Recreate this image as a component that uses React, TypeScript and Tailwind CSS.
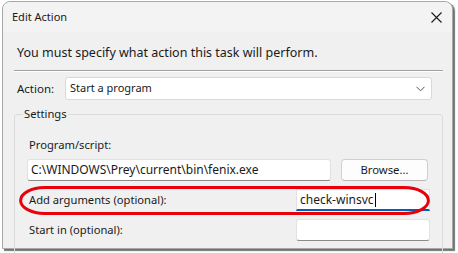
import React from "react";

const font = { fontFamily: '"Segoe UI", "Noto Sans", "Open Sans", sans-serif' };

function TextBox({ className, children }: { className?: string; children?: React.ReactNode }) {
  return (
    <div
      className={`flex h-[22px] items-center border border-[#e1e1e1] border-b-[#8a8a8a] bg-white px-[3px] text-[12px] text-[#1a1a1a] rounded-[3px] ${className ?? ""}`}
    >
      {children}
    </div>
  );
}

export default function App() {
  return (
    <div className="h-[253px] w-[458px] overflow-hidden bg-white" style={font}>
      <div className="ml-[2px] mt-[1px] h-[248px] w-[451px] rounded-t-[8px] border border-[#a8a8a8] bg-[#f0f0f0] shadow-[2px_2px_1px_rgba(0,0,0,0.55)]">
        {/* title bar */}
        <div className="flex h-[30px] items-center justify-between rounded-t-[8px] bg-[#f3f3f3] pl-[9px] pr-[10px]">
          <span className="text-[11px] text-[#1a1a1a]">Edit Action</span>
          <svg width="11" height="11" viewBox="0 0 11 11" className="mt-[1px]">
            <path d="M0.5 0.5 L10.5 10.5 M10.5 0.5 L0.5 10.5" stroke="#1a1a1a" strokeWidth="1.1" />
          </svg>
        </div>

        <div className="pl-[11px] pr-[9px]">
          <p className="mt-[13px] pl-[3px] text-[12.5px] leading-[16px] text-[#1a1a1a]">
            You must specify what action this task will perform.
          </p>
          <div className="mt-[9px] h-[2px] border-t border-[#a0a0a0] border-b border-b-white" />

          {/* action row */}
          <div className="mt-[5px] flex items-center pl-[3px]">
            <span className="w-[48px] text-[11.5px] text-[#1a1a1a]">Action:</span>
            <div className="flex h-[23px] w-[367px] items-center justify-between rounded-[3px] border border-[#d9d9d9] bg-white pl-[4px] pr-[6px] text-[11px] text-[#1a1a1a]">
              <span>Start a program</span>
              <svg width="9" height="6" viewBox="0 0 9 6">
                <path d="M0.5 0.8 L4.5 4.8 L8.5 0.8" fill="none" stroke="#555" strokeWidth="1" />
              </svg>
            </div>
          </div>

          {/* settings group */}
          <div className="relative mt-[14px] h-[160px] rounded-[3px] border border-[#dcdcdc] pl-[12px] pr-[12px]">
            <span className="absolute left-[8px] top-[-9px] bg-[#f0f0f0] px-[1px] text-[11.2px] leading-[16px] text-[#1a1a1a]">
              Settings
            </span>
            <p className="mt-[22px] pl-[2px] text-[11.2px] leading-[16px] text-[#1a1a1a]">Program/script:</p>
            <div className="mt-[6px] flex items-center">
              <TextBox className="w-[304px]">C:\WINDOWS\Prey\current\bin\fenix.exe</TextBox>
              <button className="ml-[10px] h-[22px] w-[87px] rounded-[4px] border border-[#d0d0d0] border-b-[#b8b8b8] bg-[#fdfdfd] text-[11.3px] text-[#1a1a1a]">
                Browse...
              </button>
            </div>
            <div className="relative mt-[8px] flex items-center justify-between">
              <span className="pl-[2px] text-[11.2px] text-[#1a1a1a]">Add arguments (optional):</span>
              <div className="flex h-[22px] w-[134px] items-center border border-[#e1e1e1] border-b-2 border-b-[#005fb8] bg-white px-[3px] text-[12px] text-[#1a1a1a]">
                check-winsvc<span className="ml-[1px] h-[14px] w-[1px] bg-black" />
              </div>
              {/* red annotation */}
              <svg
                className="pointer-events-none absolute left-[-8px] top-[-3px]"
                width="411"
                height="29"
                viewBox="0 0 411 29"
              >
                <rect x="1.6" y="1.6" width="407.8" height="25.8" rx="24" ry="12.9" fill="none" stroke="#e8000a" strokeWidth="3" />
              </svg>
            </div>
            <div className="mt-[8px] flex items-center justify-between">
              <span className="pl-[2px] text-[11.2px] text-[#1a1a1a]">Start in (optional):</span>
              <TextBox className="w-[134px]" />
            </div>
          </div>
        </div>
      </div>
    </div>
  );
}
